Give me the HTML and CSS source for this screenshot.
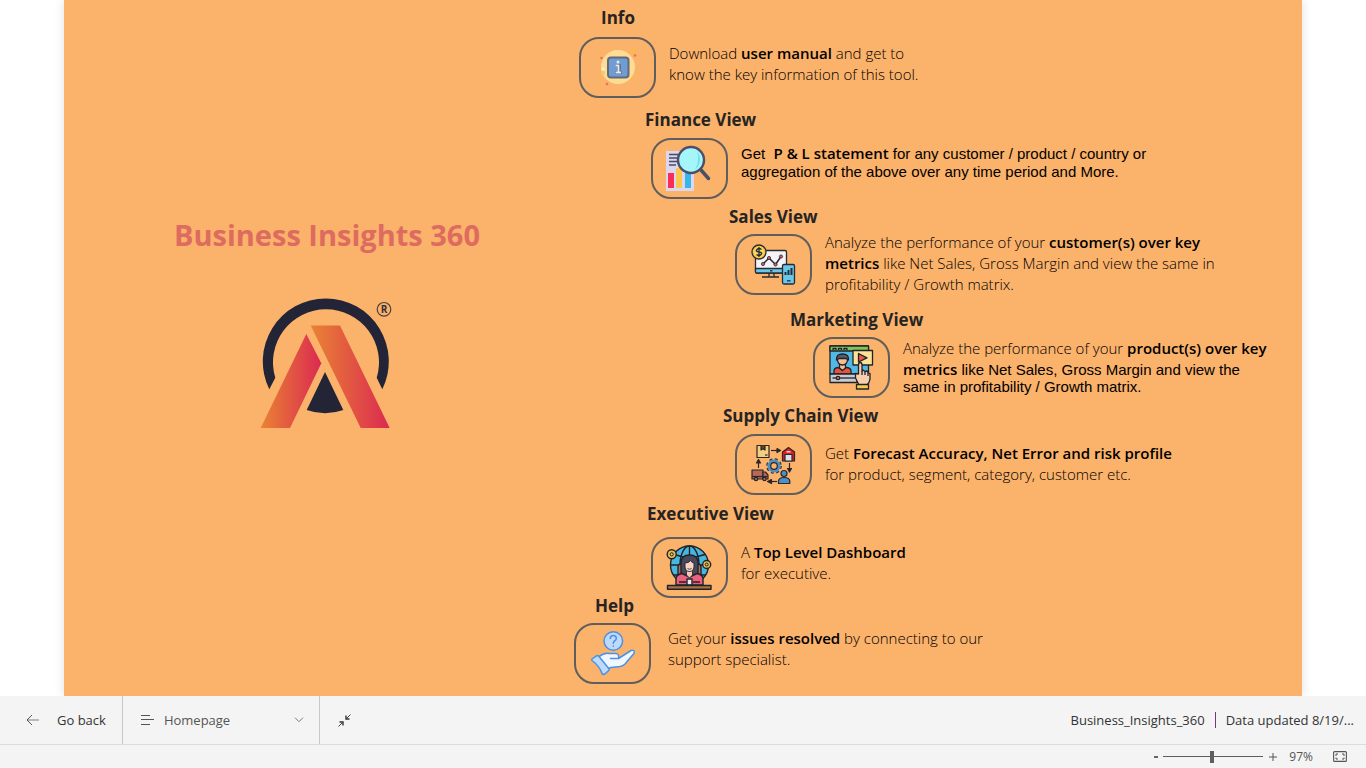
FILE: index.html
```html
<!DOCTYPE html>
<html lang="en">
<head>
<meta charset="utf-8">
<title>Business Insights 360</title>
<link rel="stylesheet" href="styles.css">
</head>
<body>
<main class="report">
  <div class="brand">
    <h1 class="brand-title">Business Insights 360</h1>
    <svg class="brand-logo" viewBox="2 0 140 135" role="img" aria-label="Company logo">
      <defs>
        <linearGradient id="warm" x1="0" x2="1" y1="0" y2="0"><stop offset="0" stop-color="#e98334"/><stop offset="1" stop-color="#db2a50"/></linearGradient>
      </defs>
      <path fill="#232536" d="M14.3 94.300A63 63 0 1 1 127.300 94.300L121.700 82.800A53 53 0 1 0 20.300 82.800Z"/>
      <path fill="url(#warm)" d="M51.3 39L66.3 68.3 35 133H5.7Z"/>
      <path fill="url(#warm)" d="M55.7 30.5H85L134.7 133H105.7Z"/>
      <path fill="#232536" d="M70 77L88.3 115Q70 121.5 51.7 115Z"/>
      <circle cx="129" cy="14.3" r="6.8" fill="none" stroke="#4d3f40" stroke-width="1.2"/>
      <text class="logo-mark" x="129" y="18" text-anchor="middle">R</text>
    </svg>
  </div>

  <nav class="views" aria-label="Report views">
    <section class="view view-info">
      <h2 class="view-title">Info</h2>
      <div class="view-row">
        <button class="view-button" type="button" aria-label="Info">
          <svg viewBox="0 0 77 61">
            <circle cx="39" cy="30" r="17" fill="#fddc94"/>
            <rect x="29" y="20.500" width="20.500" height="20" rx="3" fill="#6f9dd3" stroke="#646978" stroke-width="2"/>
            <path d="M36.500 28.500H40V35M36 35.500H42.500" stroke="#596176" stroke-width="3.200" fill="none"/>
            <path d="M36.500 28.500H39.500V35M36.500 35.500H42" stroke="#e5eaf4" stroke-width="1.800" fill="none"/>
            <circle cx="39" cy="25" r="1.500" fill="#e5eaf4"/>
            <circle cx="54" cy="14.500" r="2.200" fill="#fbbb3c"/><circle cx="24" cy="36" r="2.200" fill="#fcc860"/><circle cx="54" cy="42" r="1.200" fill="#fcbb3f"/>
            <circle cx="24" cy="32" r="1.500" fill="#fff3dc"/>
            <circle cx="22.500" cy="21" r="1.300" fill="#f66b58"/><circle cx="56" cy="18.500" r="1.300" fill="#f66b58"/><circle cx="28" cy="47" r="1.300" fill="#f66b58"/>
          </svg>
        </button>
        <p class="view-text">Download <b>user manual</b> and get to<br>know the key information of this tool.</p>
      </div>
    </section>

    <section class="view view-finance">
      <h2 class="view-title">Finance View</h2>
      <div class="view-row">
        <button class="view-button" type="button" aria-label="Finance View">
          <svg viewBox="0 0 77 61">
            <path d="M15 13H43V53H15Z" fill="#dcd6ee"/>
            <path d="M18 16.500H29M18 20H28M18 23.500H28M18 27H25" stroke="#4a4a68" stroke-width="1.500"/>
            <rect x="17" y="35" width="6" height="15" fill="#fa2c58"/><rect x="25" y="30" width="6" height="20" fill="#fdc74f"/><rect x="34" y="35" width="6" height="15" fill="#35b8e8"/>
            <path d="M50 32L57.500 40.500" stroke="#4b4f69" stroke-width="3.500" stroke-linecap="round"/>
            <circle cx="40" cy="22" r="13" fill="#a5f6fb" stroke="#4b4f69" stroke-width="2.400"/>
            <path d="M46 13Q53 23 44 32Q49 22 46 13Z" fill="#74e0f0"/>
          </svg>
        </button>
        <p class="view-text tight plain">Get&nbsp; <b>P &amp; L statement</b> for any customer / product / country or<br>aggregation of the above over any time period and More.</p>
      </div>
    </section>

    <section class="view view-sales">
      <h2 class="view-title">Sales View</h2>
      <div class="view-row">
        <button class="view-button" type="button" aria-label="Sales View">
          <svg viewBox="0 0 77 61" stroke="#262b35" stroke-width="1.300" stroke-linejoin="round">
            <path d="M34 39V43M39 39V43M27 43H44" fill="none"/>
            <rect x="20.500" y="16.500" width="31" height="22.500" rx="1.500" fill="#f4f4f6"/>
            <path d="M20.500 34.500H51.500V38Q51.500 39 50.500 39H21.500Q20.500 39 20.500 38Z" fill="#69c7ea"/>
            <path d="M35 36.800H37.500" fill="none"/>
            <path d="M28 30L34 24 40.500 30.500 46 22.500" fill="none" stroke-width="1.500"/>
            <g fill="#e65366" stroke-width="0.800"><circle cx="28" cy="30" r="1.600"/><circle cx="34" cy="24" r="1.600"/><circle cx="40.500" cy="30.500" r="1.600"/><circle cx="46" cy="22.500" r="1.600"/></g>
            <circle cx="24" cy="18" r="7" fill="#f9c640"/><circle cx="24" cy="18" r="5" fill="#fbd761" stroke="none"/>
            <path d="M26.500 15.500Q24 13.500 22 15.500T24 18T26 20.500T21.500 20.500M24 13V23" fill="none"/>
            <rect x="47.500" y="30.500" width="12" height="19.500" rx="1.500" fill="#69c7ea"/>
            <path d="M50.500 41V38M53.500 41V36M56.500 41V34" stroke-width="2"/><path d="M52 46.800H55.500" fill="none"/>
          </svg>
        </button>
        <p class="view-text">Analyze the performance of your <b>customer(s) over key<br>metrics</b> like Net Sales, Gross Margin and view the same in<br>profitability / Growth matrix.</p>
      </div>
    </section>

    <section class="view view-marketing">
      <h2 class="view-title">Marketing View</h2>
      <div class="view-row">
        <button class="view-button" type="button" aria-label="Marketing View">
          <svg viewBox="0 0 77 61" stroke="#202329" stroke-width="1.300" stroke-linejoin="round">
            <rect x="17" y="9" width="38.500" height="28" fill="#52b9e6"/>
            <rect x="17" y="9" width="38.500" height="5" fill="#82c35f"/>
            <path d="M20 13V11.500H23V13M25.500 13V11.500H28.500V13M31 13V11.500H34V13" fill="none"/>
            <path d="M21 37V34Q21 31 25 30.500L29 33 33.500 30.500Q38 31 38 34V37Z" fill="#e9513d"/>
            <path d="M26.500 27V31L29.500 33.500 32.500 31V27Z" fill="#f7bd93"/>
            <circle cx="29.500" cy="23" r="5" fill="#f7bd93"/>
            <path d="M23.500 23Q23 17 29.500 17Q36 17 35.500 23L33 21.500H26Z" fill="#555c6c"/>
            <rect x="17" y="37" width="27" height="8.500" fill="#c8cbd4"/><path d="M19.500 41H42"/><circle cx="25" cy="41" r="1.700" fill="#f17b4d"/>
            <rect x="40" y="13.500" width="19.500" height="14.500" fill="#fbe296"/>
            <path d="M45.500 16.500L54 20.800 45.500 25Z" fill="#ef5542"/>
            <path d="M45.500 37V28Q45.500 25.500 47.200 25.500Q49 25.500 49 28V34L50 33 52 34.500 54 34 55.500 36 57 36.500V42Q56.500 46 54 48H46L42.500 41V36.500Z" fill="#f9ceae"/>
            <path d="M49 34V38M52 35V38M55 36V39" fill="none"/>
            <path d="M43.500 47.500H55.500V52H43.500Z" fill="#f6cd4e"/>
          </svg>
        </button>
        <p class="view-text">Analyze the performance of your <b>product(s) over key<br>metrics</b><span class="plain"> like Net Sales, Gross Margin and view the</span><span class="plain last-line">same in profitability / Growth matrix.</span></p>
      </div>
    </section>

    <section class="view view-supply">
      <h2 class="view-title">Supply Chain View</h2>
      <div class="view-row">
        <button class="view-button" type="button" aria-label="Supply Chain View">
          <svg viewBox="0 0 77 61" stroke="#2c2625" stroke-width="1.200" stroke-linejoin="round">
            <rect x="22" y="11.500" width="12" height="12" fill="#f4ce80"/><path d="M26 11.500V16L28 14.800 30 16V11.500" fill="#60452e"/><path d="M30 21H32.500"/>
            <path d="M36 16.500H43" fill="none"/><path d="M42 14.500L45.500 16.500 42 18.500Z" fill="#2c2625"/>
            <path d="M47.500 27V18L53.500 13.500 59.500 18V27Z" fill="#dd2024"/><rect x="50" y="20.500" width="7" height="6.500" fill="#dbe2ee"/><path d="M51.500 17.800H55.500" stroke="#fff"/>
            <path d="M54.500 29V35" fill="none"/><path d="M52.500 34.500L54.500 38 56.500 34.500Z" fill="#2c2625"/>
            <circle cx="39" cy="32" r="6.300" fill="none" stroke-width="3" stroke-dasharray="2.600 2.350"/>
            <circle cx="39" cy="32" r="4.900" fill="none" stroke="#4a91c9" stroke-width="3"/><circle cx="39" cy="32" r="6.100" fill="none" stroke="#4a91c9" stroke-width="1.500" stroke-dasharray="2.400 2.390"/><circle cx="39" cy="32" r="3.300" fill="none"/>
            <path d="M17 36H28V45H17Z" fill="#b5695b"/><path d="M28 38H30.500L33 41V45H28Z" fill="#b5695b"/><circle cx="21" cy="45" r="1.700" fill="#b5695b"/><circle cx="29.500" cy="45" r="1.700" fill="#b5695b"/><path d="M17 42.500H32.500"/>
            <path d="M23.500 34V28" fill="none"/><path d="M21.500 29L23.500 25.500 25.500 29Z" fill="#2c2625"/>
            <path d="M42 47.500H36" fill="none"/><path d="M36.500 45.500L32.500 47.500 36.500 49.500Z" fill="#2c2625"/>
            <path d="M43.500 49.500V47Q44 43.500 49 43.500Q54.500 43.500 54.800 47V49.500Z" fill="#4a91c9"/><circle cx="49" cy="39.500" r="3" fill="#4a91c9"/>
          </svg>
        </button>
        <p class="view-text">Get <b>Forecast Accuracy, Net Error and risk profile</b><br>for product, segment, category, customer etc.</p>
      </div>
    </section>

    <section class="view view-executive">
      <h2 class="view-title">Executive View</h2>
      <div class="view-row">
        <button class="view-button" type="button" aria-label="Executive View">
          <svg viewBox="0 0 77 61" stroke="#20232b" stroke-width="1.400" stroke-linejoin="round">
            <circle cx="38.500" cy="28" r="19" fill="#47b7df"/>
            <ellipse cx="38.500" cy="28" rx="9.500" ry="19" fill="none"/><path d="M23 17.500Q38.500 23 54 17.500M19.500 28H57.500M38.500 9V20M22 38H55" fill="none"/>
            <path d="M27 40V30Q27 27 30 27H47Q50 27 50 30V40Z" fill="#a9714f"/>
            <path d="M30 38V26Q30 18 38.500 18Q47 18 47 26V38Z" fill="#49475a"/>
            <path d="M25 48V42Q25 37.500 31 36.500L38.500 40 46 36.500Q52 37.500 52 42V48Z" fill="#eb607c"/>
            <path d="M35.500 33V38L38.500 41 41.500 38V33Z" fill="#f7c9b5" stroke-width="0.800"/>
            <path d="M34 26Q38 26 39.500 23.500Q40.500 25.500 43 26V30Q42.500 34.500 38.500 34.500T34 30Z" fill="#f9d3c3" stroke-width="0.900"/>
            <path d="M36.500 31.500Q38.500 33 40.500 31.500" fill="none" stroke-width="0.800"/>
            <path d="M36 42H41V48H36Z" fill="#e9ebef"/><path d="M28 45H35M42 45H49" fill="none"/>
            <rect x="16.500" y="48.500" width="43.500" height="3.800" fill="#a87540"/>
            <g fill="#e8c050"><circle cx="20.700" cy="17.300" r="4.500"/><circle cx="55.700" cy="27.500" r="4"/></g>
            <g fill="none" stroke-width="1"><circle cx="20.700" cy="17.300" r="1.600"/><circle cx="55.700" cy="27.500" r="1.500"/></g>
          </svg>
        </button>
        <p class="view-text">A <b>Top Level Dashboard</b><br>for executive.</p>
      </div>
    </section>

    <section class="view view-help">
      <h2 class="view-title">Help</h2>
      <div class="view-row">
        <button class="view-button" type="button" aria-label="Help">
          <svg viewBox="0 0 77 61" stroke="#4b90e8" stroke-width="1.500" stroke-linejoin="round" stroke-linecap="round">
            <circle cx="39.300" cy="18" r="9.300" fill="#bfdaf9"/>
            <path d="M36.300 15.500Q36.300 12.500 39.300 12.500T42.300 15.500Q42.300 17 40.500 18Q39.300 18.700 39.300 20.500M39.300 23V23.300" fill="none"/>
            <path d="M24.500 34Q30 29.500 35 30.500H42Q45.500 31 44.500 35.500L57 27.500Q60 26.500 60.300 29Q60.300 30 59.500 31L51 41Q49 43 46 43.500L37 44.500 33.500 46Z" fill="#f1f7fe"/>
            <path d="M36.500 35.500H44.500" fill="none"/>
            <path d="M18 36L22.500 32.800Q24 32 25 33.500L34.800 45.500Q35.500 46.800 34.500 47.800L30.500 51.300Q29 52 28 50.500Q25.500 43 18 37.500Q17.300 36.800 18 36Z" fill="#bfdaf9"/>
          </svg>
        </button>
        <p class="view-text">Get your <b>issues resolved</b> by connecting to our<br>support specialist.</p>
      </div>
    </section>
  </nav>
</main>

<footer class="bars">
  <div class="nav-bar">
    <button class="nav-item back" type="button">
      <svg class="back-icon" viewBox="0 0 14 12"><path d="M13 6H1" stroke="#a6a6a6" stroke-width="1.500"/><path d="M6 1L1 6 6 11" fill="none" stroke="#555"/></svg>
      <span>Go back</span>
    </button>
    <button class="nav-item page-menu" type="button" aria-haspopup="listbox">
      <svg class="list-icon" viewBox="0 0 13 10"><path d="M0 .5H9M0 4.500H13M0 9.500H9" stroke="#555"/></svg>
      <span>Homepage</span>
      <svg class="chevron" viewBox="0 0 10 6"><path d="M1 .7L5 4.700 9 .7" fill="none" stroke="#777"/></svg>
    </button>
    <button class="nav-item shrink" type="button" aria-label="Exit full screen">
      <svg class="shrink-icon" viewBox="0 0 13 13"><path d="M12.500 .5L8.500 4.500M.5 12.500L4.500 8.500" stroke="#444"/><path d="M8 1.500V5H11.500M1.500 8H5V11.500" fill="none" stroke="#333" stroke-width="1.400"/></svg>
    </button>
    <div class="status">
      <span class="status-name">Business_Insights_360</span>
      <span>Data updated 8/19/...</span>
    </div>
  </div>
  <div class="zoom-bar">
    <button class="zoom-step" type="button" aria-label="Zoom out"><svg viewBox="0 0 8 8"><path d="M2 4H6" stroke="#444" stroke-width="1.600"/></svg></button>
    <input class="zoom-slider" type="range" min="50" max="146" value="97" aria-label="Zoom">
    <button class="zoom-step" type="button" aria-label="Zoom in"><svg viewBox="0 0 8 8"><path d="M0 4H8M4 0V8" stroke="#555"/></svg></button>
    <span class="zoom-value">97%</span>
    <button class="fit" type="button" aria-label="Fit to page"><svg viewBox="0 0 14 11"><rect x=".6" y=".6" width="12.800" height="9.800" rx="1" fill="none" stroke="#555" stroke-width="1.100"/><path d="M5 3H3V5M9 3H11V5M5 8H3V6.500M9 8H11V6.500" fill="none" stroke="#555"/></svg></button>
  </div>
</footer>
</body>
</html>
```
FILE: styles.css
```css
* { box-sizing: border-box; }
body {
  margin: 0;
  min-height: 100vh;
  display: flex;
  flex-direction: column;
  background: #fff;
  font-family: "Open Sans", "Noto Sans", sans-serif;
  color: #000;
}
button {
  padding: 0;
  border: 0;
  background: none;
  font: inherit;
  color: inherit;
  cursor: pointer;
}
svg { display: block; }
.report {
  flex: 1;
  display: grid;
  grid-template-columns: 510fr 728fr;
  margin: 0 64px;
  background: #fbb26b;
  box-shadow: 0 0 10px rgba(0, 0, 0, 0.12);
}
.brand {
  display: flex;
  flex-direction: column;
  align-items: center;
  gap: 40px;
  padding: 215px 0 0 16px;
}
.brand-title {
  margin: 0;
  font-size: 29px;
  line-height: 40px;
  font-weight: 700;
  color: #de6b5f;
}
.brand-logo { width: 140px; height: 135px; }
.logo-mark { font: 700 10px "Open Sans", sans-serif; fill: #33303a; }
.views { padding: 10px 0 12px; }
.view-title {
  margin: 0 0 10px;
  font-size: 17px;
  line-height: 16px;
  font-weight: 700;
  color: #252423;
}
.view-row { display: flex; align-items: flex-start; gap: 13px; }
.view-button {
  flex: none;
  width: 77px;
  height: 61px;
  border: 2px solid #605e5c;
  border-radius: 20px;
}
.view-button svg { width: 77px; height: 61px; margin: -2px; }
.view-text {
  margin: 0;
  padding-top: 6px;
  font-size: 15px;
  font-weight: 300;
  line-height: 21px;
  white-space: nowrap;
}
.view-text b {
  font-family: "Open Sans", "Noto Sans", sans-serif;
  font-weight: 600;
  line-height: 16px;
}
.plain { font-family: "Liberation Sans", Arial, sans-serif; }
.view-text.tight { padding-top: 7px; line-height: 18px; }
.last-line { display: block; line-height: 14px; }

.view-info { margin-left: 5px; }
.view-info .view-title { padding-left: 22px; margin-bottom: 11px; }
.view-finance { margin: 14px 0 0 71px; }
.view-finance .view-row { padding-left: 6px; }
.view-sales { margin: 10px 0 0 155px; }
.view-sales .view-title { margin-bottom: 9px; }
.view-sales .view-row { padding-left: 6px; }
.view-sales .view-text { margin-top: -2px; padding-top: 0; }
.view-marketing { margin: 17px 0 0 216px; }
.view-marketing .view-title { margin-bottom: 9px; }
.view-marketing .view-row { padding-left: 23px; }
.view-marketing .view-text { padding-top: 1px; }
.view-supply { margin: 10px 0 0 149px; }
.view-supply .view-row { padding-left: 12px; }
.view-supply .view-text { padding-top: 9px; }
.view-executive { margin: 11px 0 0 73px; }
.view-executive .view-title { margin-bottom: 15px; }
.view-executive .view-row { padding-left: 4px; }
.view-executive .view-text { padding-top: 5px; }
.view-help .view-title { padding-left: 21px; margin-bottom: 9px; }
.view-help .view-text { padding: 5px 0 0 4px; }

.bars { background: #f4f4f4; color: #333; }
.nav-bar {
  display: flex;
  height: 49px;
  border-bottom: 1px solid #dcdcdc;
  font-size: 13px;
}
.nav-item { display: flex; align-items: center; }
.back { gap: 17px; padding: 0 16px 0 26px; border-right: 1px solid #c8c8c8; }
.back-icon { width: 14px; height: 12px; }
.page-menu {
  width: 197px;
  gap: 10px;
  padding: 0 15px 0 18px;
  border-right: 1px solid #c8c8c8;
  color: #555;
}
.list-icon { width: 13px; height: 10px; }
.chevron { width: 10px; height: 6px; margin-left: auto; }
.shrink { padding: 0 18px; }
.shrink-icon { width: 13px; height: 13px; }
.status { display: flex; align-items: center; margin-left: auto; padding-right: 12px; }
.status-name {
  padding-right: 10px;
  margin-right: 10px;
  border-right: 1px solid #743a78;
  line-height: 16px;
}
.zoom-bar {
  height: 23px;
  display: flex;
  align-items: center;
  justify-content: flex-end;
  padding-right: 19px;
  font-size: 12px;
  color: #555;
}
.zoom-step svg { width: 8px; height: 8px; }
.zoom-slider {
  appearance: none;
  width: 100px;
  height: 12px;
  margin: 0 6px 0 3px;
  background: linear-gradient(#605e5c, #605e5c) center / 100% 1px no-repeat;
}
.zoom-slider::-webkit-slider-thumb {
  appearance: none;
  width: 4px;
  height: 12px;
  background: #605e5c;
}
.zoom-value { margin: 0 20px 0 12px; }
.fit svg { width: 14px; height: 11px; }
```
